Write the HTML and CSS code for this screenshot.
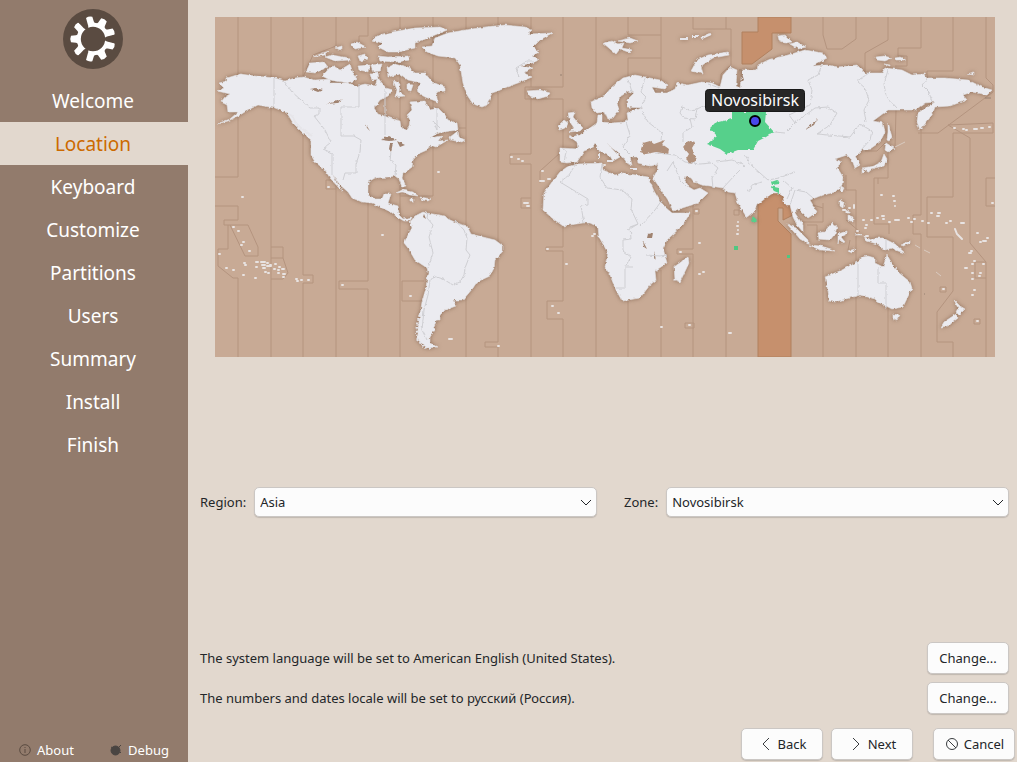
FILE: index.html
```html
<!DOCTYPE html>
<html lang="en">
<head>
<meta charset="utf-8">
<title>Location</title>
<link rel="stylesheet" href="styles.css">
</head>
<body>

<aside class="sidebar">
    <svg class="logo" viewBox="-30 -30 60 60">
        <defs>
            <path id="tooth" d="M14 -5L17 -3.8L22 -3.2Q23.5 0 22 3.2L17 3.8L14 5z"/>
            <path id="slit" d="M11 -1L14 -2.5L24 -5V5L14 2.5L11 1z"/>
        </defs>
        <circle r="30" fill="#5a4b41"/>
        <circle r="14.2" fill="none" stroke="#fff" stroke-width="4"/>
        <g fill="#fff">
            <use href="#tooth" transform="rotate(20)"/>
            <use href="#tooth" transform="rotate(60)"/>
            <use href="#tooth" transform="rotate(100)"/>
            <use href="#tooth" transform="rotate(140)"/>
            <use href="#tooth" transform="rotate(180)"/>
            <use href="#tooth" transform="rotate(220)"/>
            <use href="#tooth" transform="rotate(260)"/>
            <use href="#tooth" transform="rotate(300)"/>
            <use href="#tooth" transform="rotate(340)"/>
        </g>
        <g fill="#5a4b41">
            <use href="#slit"/>
            <use href="#slit" transform="rotate(120)"/>
            <use href="#slit" transform="rotate(240)"/>
        </g>
    </svg>
    <ol class="steps">
        <li>Welcome</li>
        <li class="current">Location</li>
        <li>Keyboard</li>
        <li>Customize</li>
        <li>Partitions</li>
        <li>Users</li>
        <li>Summary</li>
        <li>Install</li>
        <li>Finish</li>
    </ol>
    <div class="tools">
        <button type="button">
            <svg class="small-icon" viewBox="0 0 12 12" fill="none" stroke="#5a4b41">
                <circle cx="6" cy="6" r="5.3"/>
                <path d="M6 5v4M6 3v1"/>
            </svg>
            About
        </button>
        <button type="button">
            <svg class="small-icon" viewBox="0 0 12 12" fill="#4a4542" stroke="#4a4542">
                <circle cx="5.5" cy="6.5" r="4.5"/>
                <path d="M8 4l3-3M1 3l2 1M10 8l1 1" stroke-width="1"/>
            </svg>
            Debug
        </button>
    </div>
</aside>

<main class="page">
    <div class="content">
        <svg class="map" viewBox="215 17 780 340" role="img" aria-label="Time zone map">
            <defs>
                <filter id="coast" filterUnits="userSpaceOnUse" x="215" y="17" width="780" height="340" color-interpolation-filters="sRGB">
                    <feTurbulence type="fractalNoise" baseFrequency="0.25" numOctaves="2" seed="4" result="noise"/>
                    <feDisplacementMap in="SourceGraphic" in2="noise" scale="3" xChannelSelector="R" yChannelSelector="G" result="land"/>
                    <feGaussianBlur in="land" stdDeviation="2" result="blur"/>
                    <feColorMatrix in="blur" values="0 0 0 0 .45  0 0 0 0 .32  0 0 0 0 .24  0 0 0 .7 0" result="shade"/>
                    <feMerge>
                        <feMergeNode in="shade"/>
                        <feMergeNode in="land"/>
                    </feMerge>
                </filter>
            </defs>

            <rect x="215" y="17" width="780" height="340" fill="#c8aa95"/>

            <!-- selected offset -->
            <path fill="#c6906d" stroke="#b0805f" d="M758 17H791V33H772V49L752 64H742V32H758z"/>
            <path fill="#c6906d" stroke="#b0805f" d="M758 190V357H791V234L778 221V208H783V220L793 215V190z"/>

            <!-- zone limits -->
            <g fill="none" stroke="#b4947f">
                <path d="M238 17V177H215M215 206H238V220H224V225H248L258 247V256H245L230 225M228 225V249H218V266L233 278H238V357"/>
                <path d="M271 17V357M271 247H283V258H271M283 258L288 273L283 279H271M303 17V77M303 107V275H313V283H303V357"/>
                <path d="M303 77L313 55L336 46V17M368 17V36H359V44M336 180H326V189H336V357M336 180V189M368 190V281H339V289H368V357"/>
                <path d="M400 17V357M424 281H402V301H424M433 17V196H400M466 17V357M459 128H466M498 17V342H485V347H498V357"/>
                <path d="M531 17V87M563 17V87H525V99H563V150M531 99V154H510V164H531V357M531 198H521V208H531M560 153L540 171V183"/>
                <path d="M563 226V247H546V251H563V301H547V319H563V357M596 17V110M596 225V357M628 17V35H661M661 17V80M661 58H628V78M628 300V357M661 270V357"/>
                <path d="M693 17V29H731V65L721 74V84M726 17V29M693 205V249H677V254H693V357M685 323H694V328H685zM694 209H699V214H694zM726 190V357M734 210H739V215H734z"/>
                <path d="M823 17V35L827 49H842L856 39V17M888 17V40L865 53V72M921 17V48H898V56H907V66H895M953 17V71H927V77M986 17V78L993 85V92L938 133H918"/>
                <path d="M948 125L993 123V133H953M948 125L970 138V243L986 262V357M975 262V278H986M975 262H986M986 178H995M986 178V206H995"/>
                <path d="M896 110L895 148L888 152V178H874V224H889V234M865 151H877L885 143M921 133V215H913V234H921V357M953 133V197H927V237H953V291L937 312V342H953V357"/>
                <path d="M823 203V222H795M856 190V357M823 245V357M888 305V357M813 205L823 208M807 225H817V240M921 100V133M856 190H846V175M846 220L860 232M850 240L848 250M878 178V184"/>
                <path d="M940 287H946V292H940zM974 319H980V324H974z"/>
            </g>

            <g filter="url(#coast)">
                <!-- continents -->
                <g fill="#ebebf0" stroke="#e2e0e2" stroke-width=".6">
                    <path d="M217 91L224 88L219 83L227 81V78L240 74L255 76L275 78L285 81L295 78L303 77L315 80L330 79L330 83L348 83L357 86L365 84L375 86L378 78L382 83L386 88L393 90L388 96L380 100L374 108L378 114L390 118L400 121L401 127L406 130L409 126L410 120L407 115L412 110L410 102L425 101L430 110L438 108L445 115L448 120L457 123L458 130L450 131L438 133L430 138L442 136L438 141L448 140L436 147L430 145L427 150L418 154L413 160L412 167L403 174L402 178L406 186L402 187L399 179L395 176L388 177L375 178L368 182V195L375 199L382 199L384 194L391 194L388 203L398 206L399 215L403 219L412 217L410 221L404 221L397 217L391 212L382 208L372 203L362 202L352 198L348 192L340 185L333 175L337 183L343 191L339 188L330 178L325 170L315 162L311 155V140L302 132L293 123L287 113L275 108L258 105L248 110L240 115L228 121L217 124L230 119L238 112L228 112L227 105L221 102L225 97L230 94z"/>
                    <path d="M410 222L415 216L423 212L427 213L445 216L448 219L457 223L467 226L471 234L483 237L495 240L503 246V251L495 260L494 268L490 276L477 282L473 288L463 300L453 300L456 306L445 310L440 315V320L437 320L433 328L435 330L430 337V343L437 347L427 348L418 340V328L420 315L422 302L426 288L428 272L427 268L415 260L408 248L404 243L407 237L412 228z"/>
                    <path d="M422 47L432 46L435 38L448 33L465 30L485 27L505 25L525 27L532 30L528 34L552 33L540 40L533 47L539 52L532 56L539 60L532 63L520 66L533 68L524 73L532 77L518 83L507 87L498 91L492 93L487 105L482 107L473 104L467 95L463 83L460 65L455 58L438 56L427 52z"/>
                    <path d="M560 148L578 149L577 142L570 137L580 135L587 130L597 123L598 115L602 115V122L612 123L625 122L628 120L627 113L632 111L643 108L627 107V100L634 93L628 91L620 97L617 103L619 110L613 118L608 119L605 112L597 113L592 108L591 102L605 95L612 87L623 78L635 75L645 77L660 80L668 85L665 89L652 87L655 93L667 93L675 89L677 83L688 85L702 82L712 83L720 87L723 75L730 67L737 70L736 86L740 88L742 70L757 70L758 65L768 60L788 55L805 50L823 53L827 58L812 66L827 65L838 67L857 65L865 73L882 73L885 68L902 70L912 75L925 74L927 78L945 78L968 80L982 87L992 90L987 95L972 92L963 95L967 100L950 106L935 107L932 115L920 130L917 122L918 113L935 102L925 103L915 110L888 110L873 121L883 123L885 132L880 142L870 149L862 150L855 157L860 165L855 168L852 160L847 155L835 159L842 162L837 167L843 177L842 185L835 192L820 196L810 200L817 212L808 218L798 208L795 213L803 225V232L797 225L793 217L790 205H785L783 197L780 193H773L767 197L757 205L753 213L747 218L738 203L735 193L728 192L723 188L710 186L702 185L694 182L691 178L685 176L684 179L689 187L694 190L700 188L708 193L698 203L673 211L668 200L653 178L657 171L658 164L650 166L638 163L637 157L630 157L632 165L627 163L623 157L612 148L607 143L615 152L620 157L613 161L610 156L600 152L595 143L592 148L584 151L577 162L567 163L560 162z"/>
                    <path d="M567 167L577 164L602 163L603 170L615 175L623 173L648 177L651 184L654 191L660 201L665 207L672 213L690 213L683 225L667 240L663 248L667 263L655 271L656 280L650 285L640 298L622 301L615 288L610 275L605 267L608 253L599 237L598 227L590 223H583L563 226L552 218L543 210L544 193L552 182L560 172z"/>
                    <path d="M868 256L875 258V263L883 267L887 255L893 265L898 272L910 282L912 288L903 307L892 309L878 302L875 299L860 295L835 302L830 301L825 277L842 270L858 261L863 257z"/>
                </g>

                <!-- larger islands -->
                <g fill="#ebebf0" stroke="#e2e0e2" stroke-width=".6">
                    <path d="M372 40L380 35L392 32L415 28L440 27L447 30L435 35L423 40L415 43L415 48L398 52L388 52L378 47L382 43z"/>
                    <path d="M378 56L388 57L408 56L410 60L396 62L380 61z"/>
                    <path d="M325 73L332 65L340 70L350 64L353 73L358 79L348 83L330 80L322 76z"/>
                    <path d="M310 63L324 62L328 67L315 73L306 72z"/>
                    <path d="M313 57L323 53L329 51L325 55zM325 57L332 55L349 58L350 60L335 61zM335 48L342 46V50zM358 56L365 54L368 59L360 61zM351 44L357 42L366 47L355 49zM358 66L370 65L369 72L359 70zM371 65L382 64L380 71L373 72zM370 74L378 73L379 79L372 80z"/>
                    <path d="M387 67L395 64L408 67L415 73L425 73L432 82L445 87V91L436 92L438 102L425 97L418 93L417 87L421 83L408 80L400 74L388 77z"/>
                    <path d="M393 80L400 84L399 92L405 96L395 97L397 90zM407 84L413 85L411 91L407 90z"/>
                    <path d="M450 137L458 131L459 137L465 140L462 142L451 140z"/>
                    <path d="M527 91L540 90L550 93L548 96L538 99L530 96z"/>
                    <path d="M568 113L575 112L573 117L578 123L583 128L580 131L569 132L574 128L570 122zM558 126L564 120L568 123L566 128L559 130z"/>
                    <path d="M603 43L612 41L618 44L624 43L622 48L633 50L628 52L620 49L616 54L610 49zM618 41L630 38L638 41L630 43z"/>
                    <path d="M691 71L697 60L708 55L728 52L729 55L713 58L701 66L703 74z"/>
                    <path d="M778 36L785 35L792 42L785 43L779 40zM790 44L797 42L806 47L798 49z"/>
                    <path d="M876 57L884 56L892 58L885 61L877 60zM894 58L900 57L906 60L896 60zM884 64L890 65V66zM967 74L974 72V75z"/>
                    <path d="M888 123L892 137L889 141L887 140L888 132z"/>
                    <path d="M886 143L894 148L888 152L885 150zM884 154L887 159L884 166L874 168L868 172L862 168L874 166L881 162zM862 169L865 172L862 174z"/>
                    <path d="M841 186L844 188L842 192L840 190zM840 200L844 202L843 208L840 206zM848 215L853 217L853 222L848 220zM844 209L851 213L847 213z"/>
                    <path d="M817 233L824 232L832 223L837 227L835 234L830 240L818 239zM787 224L796 228L808 240V244L800 239zM809 245L821 246L831 249L835 251L820 250z"/>
                    <path d="M838 234L847 231V234L841 237L845 242L842 243L839 239L838 244zM855 235L861 233L863 235zM848 251L855 249L852 253z"/>
                    <path d="M863 236L870 240L874 238L883 238L895 244L905 253L898 251L892 248L885 250L877 244L867 241zM900 245L910 241V243L903 246z"/>
                    <path d="M893 314L900 315L897 320L893 318zM954 300L960 306L965 309L959 315L956 312L958 308zM956 314L958 318L948 326L941 327L944 322z"/>
                    <path d="M688 257L689 263L680 282L675 280L674 267z"/>
                    <path d="M396 193L402 190L413 192L418 196L410 195L403 192zM420 197L431 199L428 201L422 200zM410 199h4v2h-4z"/>
                </g>
                <g fill="none" stroke="#e6e5e9">
                    <path stroke-width="2" d="M287 113L292 116L297 125L312 136M607 161H613M598 146V150M599 153V158M630 169H637M655 165L658 163M680 39H688M692 36H698M702 38L711 34"/>
                    <path stroke-width="3" stroke-dasharray="2 2" d="M420 315L417 326L418 340L427 349L432 347"/>
                </g>

                <!-- inland waters -->
                <g fill="#b1917c">
                    <path d="M640 152L643 143L650 141L654 144L665 140L662 144L669 149L668 154L656 152L646 154zM683 147L688 141L695 143L692 148L694 153L697 160L691 164L686 159L689 154z"/>
                </g>
                <g fill="#a08370">
                    <path d="M310 89L316 88L323 90L318 92zM327 104L343 99L337 103zM365 123L370 131L367 128zM381 140L389 136L397 140L389 141zM390 143H393L391 152L389 149zM397 141L405 145L400 147zM399 152L407 149zM407 149L414 147z"/>
                    <path d="M648 234L653 233L652 238L647 238zM643 241L647 249L644 247zM654 251L656 260L654 257zM805 130L817 119L814 125zM424 214L426 219L423 217zM738 85L742 79L739 69L741 70L744 80z"/>
                </g>

                <!-- borders on land -->
                <g fill="none" stroke="#cfcfd3">
                    <path d="M274 78V108M284 81L292 92L310 108H319V114L314 116L325 130L331 142L323 149L332 153V175M359 84V107H341V136H354L361 140L360 152L356 164V173H345L343 180M385 90V135M391 152L390 160L396 165L395 176M437 107V130L433 121M433 121L440 128"/>
                    <path d="M428 213L427 218L433 225L429 237L433 253L428 268M455 220L464 230L467 238L466 250L470 255L465 268L464 275L460 282L453 285L443 279L434 276L430 281L428 295L424 310L422 330L427 340"/>
                    <path d="M519 77L516 68L527 61H534M628 79L632 92M645 78L641 92L646 97L640 108L648 122L662 133L661 140M626 122L630 135L623 147L631 155M563 149L566 151L564 163"/>
                    <path d="M708 84L720 88M682 107L690 110L697 109L695 119L684 118L680 113zM697 109L710 103H720M683 142V133L692 127L690 119M575 165L569 175L560 182L588 199V205L581 206L584 223M602 164L600 177L607 188L622 190L632 199L631 209L638 224L630 227L631 239L623 240V251L631 257L625 267V288H616M625 267H633M640 226L655 210L662 200M638 224L628 230M646 255L660 256L667 255M667 171L673 162L680 180L687 187M655 153L675 155L685 162L700 164L711 163M712 163L718 168L712 178L713 188"/>
                    <path d="M716 162L732 160L745 165L735 175L723 188M745 155L752 166L768 180L779 178L795 172M774 132L785 133L795 123L789 115L810 105L812 90L808 80L818 75L821 67M795 123L815 108L828 107L837 113L830 125L817 134L850 137L860 124L872 131L870 140L861 150M869 73L857 81L865 88L869 100L864 110L866 122M888 70L884 84L886 96L897 108M927 79L922 85L929 92L932 102M790 205L795 190L806 192L813 198M858 261V296M878 267V283H886V309M748 192L754 184L762 182M783 180L792 188L787 199M886 240V250"/>
                </g>

                <!-- selected zone -->
                <g fill="#56d08b">
                    <path d="M732 112H766L765 122L774 132L766 137L758 141L753 150L738 150L727 154L720 149L707 144L717 136L710 128L715 123L732 119z"/>
                    <path d="M771 182L777 180L779 184L772 185zM770 186L779 188V193L774 191zM753 216L757 220L754 223L751 221z"/>
                </g>
            </g>

            <path fill="#4fc781" d="M734 246H738V250H734zM787 255H790V258H787z"/>

            <!-- small islands -->
            <g fill="none" stroke="#e8e3e2" stroke-width="2" stroke-linecap="round">
                <path d="M242 197h1M233 227h1M238 231h1M243 242h1M241 245h1M249 251h1M219 254h1M226 268h1M233 270h1M244 263h1M245 265h1M243 275h1M255 278h1M256 262h2M261 262h4M262 265h3M256 267h1M267 263h1M267 266h4M263 268h2M270 265h1M275 264h1M265 272h1M268 273h1M274 269h1M279 267h1M278 270h1M278 273h1M282 269h2M283 274h2M283 277h1M296 279h1M297 281h1M301 280h1M308 280h1M342 285h1M382 235h1M410 296h1M328 187h1"/>
                <path d="M438 172h1M511 157h1M518 159h1M522 161h1M542 171h1M540 181h4M548 179h2M524 203h4M527 206h2M547 249h1M566 264h1M552 306h1M558 313h1M592 236h1M594 234h1M449 339h3M498 346h1M661 327h1M689 325h1M729 333h2M680 252h1M699 243h1M699 274h1M703 272h1M738 222h0M737 226h1M738 230h0M737 234h1M604 165h1M696 211h1"/>
                <path d="M863 220h1M871 220h1M877 218h1M882 216h2M883 219h1M889 222h1M895 220h4M908 218h1M911 222h1M914 219h1M922 221h1M928 223h1M931 213h1M938 213h2M937 216h2M946 223h1M950 221h1M961 223h3M977 233h1M980 242h1M983 241h3M987 238h1M969 253h2M971 251h1M974 261h1M965 268h2M972 264h1M972 273h1M983 264h1M980 273h1M979 276h1M972 279h1M974 290h1M972 295h1M943 289h1M977 321h1M992 203h1M866 225h1M865 228h1M857 231h1M881 195h1M893 196h1M894 201h1M895 206h0"/>
                <path d="M954 128h1M963 129h1M966 130h1M974 129h3M981 128h2M989 127h1M955 229l2 5l5 5M843 210h2M849 208h1M854 205v3M866 236h2"/>
            </g>
            <path fill="none" stroke="#d9cac0" stroke-width="1" d="M915 245l5 3M924 250l6 3M936 272l5 4M895 147l10-5"/>
            <path fill="none" stroke="#968071" d="M560 75h2M924 294h1M985 98h6"/>

            <!-- city -->
            <circle cx="755" cy="121" r="5" fill="#4848ea" stroke="#000" stroke-width="2"/>
            <rect x="705.5" y="89.5" width="99" height="22" rx="3" fill="#262626" stroke="#191919"/>
            <text class="city" x="755" y="106" text-anchor="middle">Novosibirsk</text>
        </svg>

        <form class="pickers">
            <label for="region">Region:</label>
            <div class="picker">
                <select id="region">
                    <option>Asia</option>
                    <option>Europe</option>
                </select>
                <svg class="arrow" viewBox="0 0 12 12"><path d="M1 3l5 5l5-5"/></svg>
            </div>
            <label class="zone-label" for="zone">Zone:</label>
            <div class="picker">
                <select id="zone">
                    <option>Novosibirsk</option>
                    <option>Omsk</option>
                </select>
                <svg class="arrow" viewBox="0 0 12 12"><path d="M1 3l5 5l5-5"/></svg>
            </div>
        </form>

        <div class="locales">
            <div class="locale">
                <span>The system language will be set to American English (United States).</span>
                <button type="button">Change...</button>
            </div>
            <div class="locale">
                <span>The numbers and dates locale will be set to русский (Россия).</span>
                <button type="button">Change...</button>
            </div>
        </div>
    </div>

    <footer class="nav">
        <button type="button">
            <svg class="nav-icon" viewBox="0 0 16 16"><path d="M11 2L5 8l6 6"/></svg>
            Back
        </button>
        <button type="button">
            <svg class="nav-icon" viewBox="0 0 16 16"><path d="M5 2l6 6l-6 6"/></svg>
            Next
        </button>
        <button type="button" class="cancel">
            <svg class="nav-icon" viewBox="0 0 16 16"><circle cx="8" cy="8" r="5.5"/><path d="M4 4l8 8"/></svg>
            Cancel
        </button>
    </footer>
</main>

</body>
</html>
```
FILE: styles.css
```css
* {
    box-sizing: border-box;
}

body {
    margin: 0;
    min-height: 100vh;
    display: flex;
    background-color: #e2d8ce;
    color: #232629;
    font-family: "Noto Sans", sans-serif;
    font-size: 13px;
}

button, select {
    font: inherit;
    color: inherit;
    background-color: #fcfcfc;
    border: 1px solid #cbc7c4;
    border-radius: 5px;
    box-shadow: 0 1px 1px #c0b8b0;
}

button {
    width: 82px;
    height: 32px;
    padding: 0;
    display: flex;
    align-items: center;
    justify-content: center;
    cursor: pointer;
}

/* sidebar */
.sidebar {
    width: 188px;
    flex-shrink: 0;
    display: flex;
    flex-direction: column;
    align-items: center;
    background-color: #927b6c;
    color: white;
}

.logo {
    width: 60px;
    height: 60px;
    margin: 9px 2px 10px 0;
    display: block;
}

.steps {
    width: 100%;
    margin: 0;
    padding: 0;
    list-style: none;
    font-size: 19px;
    line-height: 41px;
    text-align: center;
}

.steps li {
    padding: 2px 2px 0 0;
}

.steps .current {
    background-color: #e2d8ce;
    color: #cc6a00;
}

.tools {
    width: 100%;
    margin-top: auto;
    padding-right: 2px;
    display: flex;
}

.tools button {
    flex: 1;
    height: 24px;
    gap: 6px;
    background: none;
    border: none;
    box-shadow: none;
}

.small-icon {
    width: 12px;
    height: 12px;
}

/* page */
.page {
    flex: 1;
    display: flex;
    flex-direction: column;
}

.content {
    flex: 1;
    display: flex;
    flex-direction: column;
    justify-content: space-between;
    padding: 17px 8px 14px 12px;
}

.map {
    display: block;
    margin: 0 14px 0 15px;
}

.city {
    font-size: 16px;
    fill: #fcfcfc;
}

.pickers {
    display: flex;
    align-items: center;
    gap: 8px;
    margin-top: 4px;
}

.zone-label {
    margin-left: 19px;
}

.picker {
    flex: 1;
    position: relative;
}

select {
    display: block;
    width: 100%;
    height: 30px;
    padding: 0 24px 0 5px;
    appearance: none;
}

.arrow {
    position: absolute;
    right: 5px;
    top: 10px;
    width: 12px;
    height: 12px;
    fill: none;
    stroke: #232629;
    pointer-events: none;
}

.locales {
    display: flex;
    flex-direction: column;
    gap: 8px;
}

.locale {
    display: flex;
    align-items: center;
    justify-content: space-between;
}

.nav {
    display: flex;
    justify-content: flex-end;
    gap: 8px;
    padding: 0 2px 2px;
}

.nav button {
    gap: 4px;
}

.nav .cancel {
    margin-left: 12px;
}

.nav-icon {
    width: 16px;
    height: 16px;
    fill: none;
    stroke: #3a3d40;
}
```
